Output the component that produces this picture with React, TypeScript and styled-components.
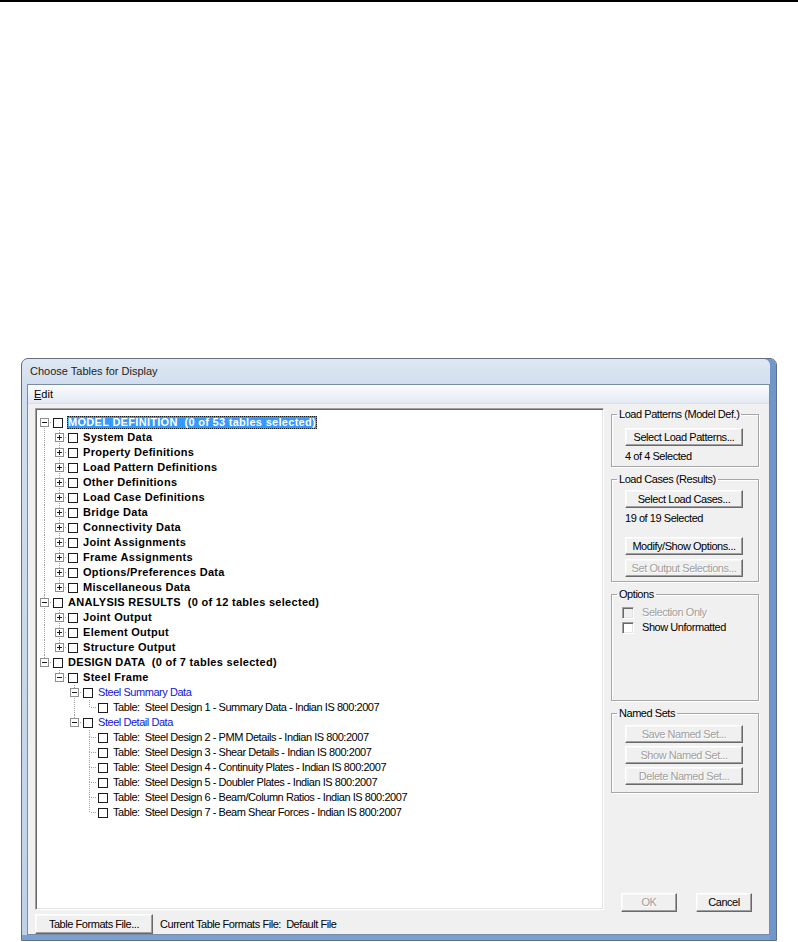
import React from 'react';
import styled, { createGlobalStyle, css } from 'styled-components';

const SANS = `"Liberation Sans", Arial, sans-serif`;
const DOT = '#a0a0a0';

/* narrow UI text: Arial-metric font pulled together to the reference's condensed widths */
const narrow = css`
  font-family: ${SANS};
  font-size: 11px;
  letter-spacing: -0.45px;
  white-space: pre;
`;

const Global = createGlobalStyle`
  html, body { margin: 0; padding: 0; background: #fff; }
  body { font-family: ${SANS}; color: #000; }
`;

const Page = styled.div`
  width: 798px;
  height: 942px;
  overflow: hidden;
  background: #fff;
`;

const TopRule = styled.div`
  height: 2px;
  background: #000;
`;

const Stage = styled.div`
  padding: 356px 0 0 21px;
`;

const Window = styled.div`
  box-sizing: border-box;
  width: 756px;
  height: 583px;
  border: 1px solid #5f6f84;
  border-radius: 7px 7px 0 0;
  background: linear-gradient(to bottom, #dfe8f3 0, #d1deee 26px, #c0d1e7 100%);
  box-shadow: inset -6px 0 0 #7096cb, inset 0 -5px 0 #7c9fd1;
  padding: 0 6px 5px 5px;
  display: flex;
  flex-direction: column;
`;

const TitleBar = styled.div`
  height: 25px;
  display: flex;
  align-items: center;
  padding-left: 3px;
  font: 11px/1 ${SANS};
  color: #1e1e1e;
`;

const Client = styled.div`
  flex: 1;
  display: flex;
  flex-direction: column;
  background: #f0f0f0;
  border: 1px solid #7a8ca5;
`;

const MenuBar = styled.div`
  height: 18px;
  border-bottom: 1px solid #d9e0ea;
  background: linear-gradient(to bottom, #fbfcfe, #e3eaf4);
  display: flex;
  align-items: center;
  padding-left: 6px;
  font: 11px/18px ${SANS};
`;

const Body = styled.div`
  display: flex;
  gap: 7px;
  padding: 4px 10px 0 7px;
`;

const TreePanel = styled.div`
  box-sizing: border-box;
  width: 569px;
  height: 502px;
  background: #fff;
  border: 1px solid;
  border-color: #a0a0a0 #ffffff #ffffff #a0a0a0;
  box-shadow: inset 1px 1px 0 #696969, inset -1px -1px 0 #e3e3e3;
  padding: 6px 0 0 1px;
  overflow: hidden;
`;

const Row = styled.div`
  display: flex;
  align-items: center;
  height: 15px;
`;

const vLine = (h: string, y: string) => ({
  img: `repeating-linear-gradient(to bottom, ${DOT} 0 1px, transparent 1px 2px)`,
  pos: `7px ${y}`,
  size: `1px ${h}`,
});
const hLine = () => ({
  img: `repeating-linear-gradient(to right, transparent 0 1px, ${DOT} 1px 2px)`,
  pos: `8px 7px`,
  size: `7px 1px`,
});

const GuideCell = styled.span<{ $line: boolean }>`
  flex: none;
  width: 15px;
  height: 15px;
  ${p =>
    p.$line &&
    css`
      background-image: repeating-linear-gradient(to bottom, ${DOT} 0 1px, transparent 1px 2px);
      background-size: 1px 100%;
      background-position: 7px 0;
      background-repeat: no-repeat;
    `}
`;

const NodeCellBase = styled.span<{ $bg: string; $pos: string; $size: string }>`
  flex: none;
  width: 15px;
  height: 15px;
  display: flex;
  align-items: center;
  justify-content: center;
  background-image: ${p => p.$bg};
  background-position: ${p => p.$pos};
  background-size: ${p => p.$size};
  background-repeat: no-repeat;
`;

const TreeCheck = styled.span`
  flex: none;
  box-sizing: border-box;
  width: 10px;
  height: 10px;
  margin-left: 1px;
  border: 1px solid #1c1c1c;
  background: #fff;
`;

type Variant = 'bold' | 'blue' | 'plain';

const Label = styled.span<{ $variant: Variant; $selected?: boolean }>`
  margin-left: 4px;
  padding: 0 1px;
  height: 13px;
  line-height: 13px;
  ${p =>
    p.$variant === 'bold'
      ? css`
          font: bold 11px/13px ${SANS};
          letter-spacing: 0.3px;
          white-space: pre;
        `
      : css`
          ${narrow};
          line-height: 13px;
        `}
  color: ${p => (p.$variant === 'blue' ? '#1414d8' : '#000')};
  ${p =>
    p.$selected &&
    css`
      background: #3399ff;
      color: #fff;
      outline: 1px dotted #1a1a1a;
      outline-offset: -1px;
    `}
`;

const ExpanderSvg = styled.svg`
  display: block;
  shape-rendering: crispEdges;
`;

function Expander({ plus }: { plus: boolean }) {
  return (
    <ExpanderSvg width="9" height="9" viewBox="0 0 9 9">
      <rect x="0.5" y="0.5" width="8" height="8" fill="#fff" stroke="#8f8f8f" />
      <path d="M2 4.5H7" stroke="#1a1a1a" />
      {plus && <path d="M4.5 2V7" stroke="#1a1a1a" />}
    </ExpanderSvg>
  );
}

interface TNode {
  label: string;
  variant: Variant;
  expander?: 'plus' | 'minus';
  selected?: boolean;
  children?: TNode[];
}

const collapsed = (label: string): TNode => ({ label, variant: 'bold', expander: 'plus', children: [] });
const table = (n: number, text: string): TNode => ({
  label: `Table:  Steel Design ${n} - ${text} - Indian IS 800:2007`,
  variant: 'plain',
});

const TREE: TNode[] = [
  {
    label: 'MODEL DEFINITION  (0 of 53 tables selected)',
    variant: 'bold',
    expander: 'minus',
    selected: true,
    children: [
      'System Data',
      'Property Definitions',
      'Load Pattern Definitions',
      'Other Definitions',
      'Load Case Definitions',
      'Bridge Data',
      'Connectivity Data',
      'Joint Assignments',
      'Frame Assignments',
      'Options/Preferences Data',
      'Miscellaneous Data',
    ].map(collapsed),
  },
  {
    label: 'ANALYSIS RESULTS  (0 of 12 tables selected)',
    variant: 'bold',
    expander: 'minus',
    children: ['Joint Output', 'Element Output', 'Structure Output'].map(collapsed),
  },
  {
    label: 'DESIGN DATA  (0 of 7 tables selected)',
    variant: 'bold',
    expander: 'minus',
    children: [
      {
        label: 'Steel Frame',
        variant: 'bold',
        expander: 'minus',
        children: [
          {
            label: 'Steel Summary Data',
            variant: 'blue',
            expander: 'minus',
            children: [table(1, 'Summary Data')],
          },
          {
            label: 'Steel Detail Data',
            variant: 'blue',
            expander: 'minus',
            children: [
              table(2, 'PMM Details'),
              table(3, 'Shear Details'),
              table(4, 'Continuity Plates'),
              table(5, 'Doubler Plates'),
              table(6, 'Beam/Column Ratios'),
              table(7, 'Beam Shear Forces'),
            ],
          },
        ],
      },
    ],
  },
];

interface Flat {
  node: TNode;
  guides: boolean[];
  up: boolean;
  down: boolean;
}

function flatten(nodes: TNode[], guides: boolean[], out: Flat[], isRoot: boolean) {
  nodes.forEach((n, i) => {
    const down = i < nodes.length - 1;
    const up = !(isRoot && i === 0);
    out.push({ node: n, guides, up, down });
    if (n.children && n.expander === 'minus') flatten(n.children, [...guides, down], out, false);
  });
  return out;
}

function NodeCell({ up, down, children }: { up: boolean; down: boolean; children?: React.ReactNode }) {
  const layers = [hLine()];
  if (up) layers.push(vLine('7px', '0'));
  if (down) layers.push(vLine('8px', '7px'));
  return (
    <NodeCellBase
      $bg={layers.map(l => l.img).join(', ')}
      $pos={layers.map(l => l.pos).join(', ')}
      $size={layers.map(l => l.size).join(', ')}
    >
      {children}
    </NodeCellBase>
  );
}

const RightColumn = styled.div`
  width: 148px;
  display: flex;
  flex-direction: column;
`;

const Group = styled.fieldset<{ $mt: number; $pb: number; $h?: number }>`
  box-sizing: border-box;
  margin: ${p => p.$mt}px 0 0 0;
  padding: 0 0 ${p => p.$pb}px 10px;
  min-width: 0;
  ${p =>
    p.$h &&
    css`
      height: ${p.$h}px;
    `}
  border: 1px solid #a6a6a6;
  box-shadow: inset 1px 1px 0 #fff, 1px 1px 0 #fff;
  display: flex;
  flex-direction: column;
  align-items: flex-start;
`;

const Legend = styled.legend`
  margin-left: -5px;
  padding: 0 2px;
  ${narrow};
  line-height: 12px;
  color: #000;
`;

const Button = styled.button<{ $w: number; $h: number; $mt?: number; $ml?: number; $disabled?: boolean }>`
  box-sizing: border-box;
  flex: none;
  width: ${p => p.$w}px;
  height: ${p => p.$h}px;
  margin: ${p => p.$mt ?? 0}px 0 0 ${p => p.$ml ?? 0}px;
  padding: 0;
  background: #f0f0f0;
  border: 1px solid;
  border-color: #ffffff #696969 #696969 #ffffff;
  box-shadow: inset -1px -1px 0 #a0a0a0, inset 1px 1px 0 #f8f8f8;
  border-radius: 0;
  ${narrow};
  line-height: 1;
  color: ${p => (p.$disabled ? '#a0a0a0' : '#000')};
  ${p =>
    p.$disabled &&
    css`
      text-shadow: 1px 1px 0 #fff;
    `}
  display: flex;
  align-items: center;
  justify-content: center;
`;

const Status = styled.div`
  margin: 3px 0 0 3px;
  ${narrow};
  line-height: 14px;
`;

const CheckRow = styled.label<{ $mt?: number; $disabled?: boolean }>`
  display: flex;
  align-items: center;
  height: 15px;
  margin-top: ${p => p.$mt ?? 0}px;
  ${narrow};
  line-height: 15px;
  color: ${p => (p.$disabled ? '#a0a0a0' : '#000')};
  ${p =>
    p.$disabled &&
    css`
      text-shadow: 1px 1px 0 #fff;
    `}
`;

const Box = styled.span<{ $disabled?: boolean }>`
  flex: none;
  box-sizing: border-box;
  width: 12px;
  height: 12px;
  border: 1px solid;
  border-color: #a0a0a0 #ffffff #ffffff #a0a0a0;
  box-shadow: inset 1px 1px 0 #696969, inset -1px -1px 0 #e3e3e3;
  background: ${p => (p.$disabled ? '#f0f0f0' : '#fff')};
  margin-right: 8px;
`;

const BottomButtons = styled.div`
  margin-top: auto;
  margin-bottom: -2px;
  display: flex;
  gap: 19px;
  padding-left: 10px;
`;

const Footer = styled.div`
  display: flex;
  align-items: center;
  gap: 7px;
  padding: 4px 0 0 7px;
`;

const FooterText = styled.span`
  ${narrow};
  line-height: 1;
`;

export default function App() {
  const rows = flatten(TREE, [], [], true);
  return (
    <Page>
      <Global />
      <TopRule />
      <Stage>
        <Window>
          <TitleBar>Choose Tables for Display</TitleBar>
          <Client>
            <MenuBar>
              <span>
                <u>E</u>dit
              </span>
            </MenuBar>
            <Body>
              <TreePanel>
                {rows.map((r, i) => (
                  <Row key={i}>
                    {r.guides.map((g, j) => (
                      <GuideCell key={j} $line={g} />
                    ))}
                    <NodeCell up={r.up} down={r.down}>
                      {r.node.expander && <Expander plus={r.node.expander === 'plus'} />}
                    </NodeCell>
                    <TreeCheck />
                    <Label $variant={r.node.variant} $selected={r.node.selected}>
                      {r.node.label}
                    </Label>
                  </Row>
                ))}
              </TreePanel>
              <RightColumn>
                <Group $mt={0} $pb={3}>
                  <Legend>Load Patterns (Model Def.)</Legend>
                  <Button $w={118} $h={18} $mt={8} $ml={3}>
                    Select Load Patterns...
                  </Button>
                  <Status>4 of 4 Selected</Status>
                </Group>
                <Group $mt={6} $pb={4}>
                  <Legend>Load Cases (Results)</Legend>
                  <Button $w={118} $h={18} $mt={5} $ml={3}>
                    Select Load Cases...
                  </Button>
                  <Status>19 of 19 Selected</Status>
                  <Button $w={118} $h={18} $mt={12} $ml={3}>
                    Modify/Show Options...
                  </Button>
                  <Button $w={118} $h={18} $mt={4} $ml={3} $disabled>
                    Set Output Selections...
                  </Button>
                </Group>
                <Group $mt={6} $pb={0} $h={113}>
                  <Legend>Options</Legend>
                  <CheckRow $mt={5} $disabled>
                    <Box $disabled />
                    Selection Only
                  </CheckRow>
                  <CheckRow>
                    <Box />
                    Show Unformatted
                  </CheckRow>
                </Group>
                <Group $mt={6} $pb={7}>
                  <Legend>Named Sets</Legend>
                  <Button $w={118} $h={18} $mt={6} $ml={3} $disabled>
                    Save Named Set...
                  </Button>
                  <Button $w={118} $h={18} $mt={3} $ml={3} $disabled>
                    Show Named Set...
                  </Button>
                  <Button $w={118} $h={18} $mt={3} $ml={3} $disabled>
                    Delete Named Set...
                  </Button>
                </Group>
                <BottomButtons>
                  <Button $w={56} $h={19} $disabled>
                    OK
                  </Button>
                  <Button $w={56} $h={19}>
                    Cancel
                  </Button>
                </BottomButtons>
              </RightColumn>
            </Body>
            <Footer>
              <Button $w={118} $h={20}>
                Table Formats File...
              </Button>
              <FooterText>Current Table Formats File:  Default File</FooterText>
            </Footer>
          </Client>
        </Window>
      </Stage>
    </Page>
  );
}
